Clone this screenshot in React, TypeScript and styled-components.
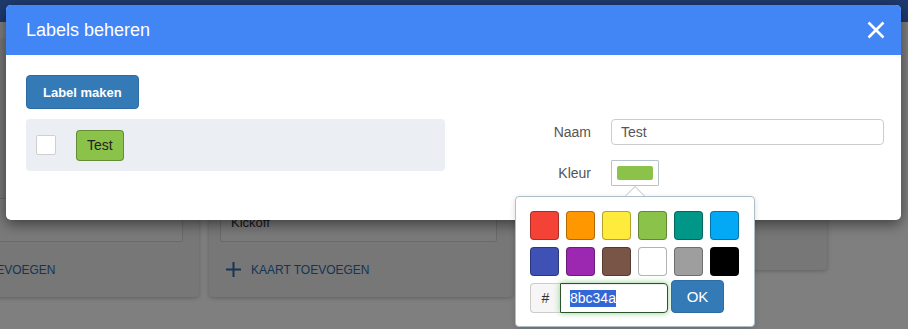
import React from 'react';
import styled, { createGlobalStyle } from 'styled-components';

const GlobalStyle = createGlobalStyle`
    body {
        margin: 0;
        font-family: "Liberation Sans", Arial, sans-serif;
    }
    * {
        box-sizing: border-box;
    }
`;

const Page = styled.div`
    position: relative;
    width: 908px;
    height: 329px;
    overflow: hidden;
    background: #fefefe;
`;

// app behind the dialog
const AppBar = styled.div`
    height: 22px;
    background: #3c74dc;
`;

const Board = styled.div`
    display: flex;
    align-items: flex-start;
    gap: 10px;
    margin-left: -105px;
    padding-top: 18px;
`;

const Column = styled.div<{ $height: number }>`
    flex: 0 0 304px;
    height: ${p => p.$height}px;
    display: flex;
    flex-direction: column;
    justify-content: flex-end;
    padding: 0 16px 0 11px;
    background: #eeeeee;
    border-radius: 4px;
    box-shadow: 0 1px 4px rgba(0, 0, 0, 0.25);
`;

const CardText = styled.div`
    height: 44px;
    padding: 16px 10px 0;
    background: #f4f4f4;
    border: 1px solid #d4d4d4;
    border-radius: 2px;
    font-size: 13px;
    color: #333;
    white-space: nowrap;
    overflow: hidden;
`;

const AddRow = styled.div`
    height: 55px;
    display: flex;
    align-items: center;
    gap: 10px;
    padding-left: 6px;
    font-size: 12px;
    color: #2c6aa6;
    text-transform: uppercase;
`;

const Backdrop = styled.div`
    position: absolute;
    inset: 0;
    padding: 5px 7px 0 6px;
    background: rgba(0, 0, 0, 0.5);
`;

const Modal = styled.div`
    background: #fff;
    border-radius: 5px;
    box-shadow: 0 4px 14px rgba(0, 0, 0, 0.5);
`;

const Header = styled.div`
    height: 50px;
    display: flex;
    align-items: center;
    justify-content: space-between;
    padding: 0 16px 0 20px;
    background: #4285f4;
    border-radius: 5px 5px 0 0;
    color: #fff;
`;

const Title = styled.h4`
    margin: 0;
    font-size: 18px;
    font-weight: normal;
`;

const CloseButton = styled.button`
    display: flex;
    padding: 0;
    border: none;
    background: none;
    color: #fff;
`;

const Body = styled.div`
    padding: 20px 17px 34px 20px;
`;

const PrimaryButton = styled.button`
    height: 34px;
    padding: 0 16px;
    background: #337ab7;
    border: 1px solid #2e6da4;
    border-radius: 4px;
    color: #fff;
    font-family: inherit;
    font-size: 13px;
    font-weight: bold;
`;

const Columns = styled.div`
    display: grid;
    grid-template-columns: 1fr 1fr;
    column-gap: 20px;
    align-items: start;
    margin-top: 10px;
`;

const LabelList = styled.div`
    padding: 10px;
    background: #ebeef2;
    border-radius: 4px;
`;

const LabelRow = styled.div`
    display: flex;
    align-items: center;
    gap: 20px;
    height: 32px;
`;

const Check = styled.input`
    appearance: none;
    width: 20px;
    height: 20px;
    margin: 0;
    background: #fff;
    border: 1px solid #cfcfcf;
    border-radius: 2px;
`;

const Tag = styled.span<{ $color: string }>`
    height: 31px;
    padding: 0 10px;
    line-height: 29px;
    background: ${p => p.$color};
    border: 1px solid rgba(0, 0, 0, 0.28);
    border-radius: 4px;
    font-size: 14px;
    color: #222;
`;

const Form = styled.div`
    display: flex;
    flex-direction: column;
    gap: 15px;
`;

const Field = styled.div`
    display: grid;
    grid-template-columns: 126px 1fr;
    column-gap: 20px;
    align-items: center;
`;

const FieldLabel = styled.label`
    text-align: right;
    font-size: 14px;
    color: #555;
`;

const TextInput = styled.input`
    width: 100%;
    height: 26px;
    padding: 0 9px;
    border: 1px solid #ccc;
    border-radius: 4px;
    font-family: inherit;
    font-size: 14px;
    color: #555;
    outline: none;
`;

const ColorAnchor = styled.div`
    position: relative;
    justify-self: start;
`;

const ColorButton = styled.button`
    display: block;
    width: 48px;
    height: 26px;
    padding: 5px;
    background: #fff;
    border: 1px solid #b6c3cc;
    border-radius: 1px;
`;

const ColorChip = styled.span<{ $color: string }>`
    display: block;
    width: 36px;
    height: 14px;
    background: ${p => p.$color};
    border-radius: 2px;
`;

const Popover = styled.div`
    position: absolute;
    top: 36px;
    left: -96px;
    z-index: 2;
    width: 240px;
    padding: 14px 14px 13px;
    background: #fff;
    border: 1px solid #aebfca;
    border-radius: 4px;
    box-shadow: 0 2px 6px rgba(0, 0, 0, 0.15);

    &::before,
    &::after {
        content: '';
        position: absolute;
        border-style: solid;
        border-color: transparent;
    }
    &::before {
        top: -21px;
        left: 109px;
        border-width: 10px;
        border-bottom-color: #aebfca;
    }
    &::after {
        top: -19px;
        left: 110px;
        border-width: 9px;
        border-bottom-color: #fff;
    }
`;

const SwatchGrid = styled.div`
    display: grid;
    grid-template-columns: repeat(6, 29px);
    gap: 7px;
`;

const SwatchButton = styled.button<{ $color: string }>`
    width: 29px;
    height: 29px;
    padding: 0;
    background: ${p => p.$color};
    border: 1px solid rgba(0, 0, 0, 0.3);
    border-radius: 4px;
`;

const HexRow = styled.div`
    display: flex;
    align-items: flex-end;
    gap: 3px;
    margin-top: 4px;
`;

const InputGroup = styled.div`
    display: flex;
    height: 30px;
`;

const Addon = styled.span`
    width: 30px;
    display: flex;
    align-items: center;
    justify-content: center;
    background: #f6f6f6;
    border: 1px solid #ccc;
    border-right: none;
    border-radius: 4px 0 0 4px;
    font-size: 14px;
    color: #333;
`;

const HexField = styled.div`
    width: 108px;
    display: flex;
    align-items: center;
    padding-left: 9px;
    border: 1px solid #2b542c;
    border-radius: 0 4px 4px 0;
    box-shadow: inset 0 1px 1px rgba(0, 0, 0, 0.075), 0 0 6px #8fd08f;
    font-size: 14px;
`;

const Selected = styled.span`
    line-height: 17px;
    background: #3367d6;
    color: #fff;
`;

const OkButton = styled.button`
    width: 53px;
    height: 33px;
    padding: 0;
    background: #337ab7;
    border: 1px solid #2e6da4;
    border-radius: 4px;
    color: #fff;
    font-family: inherit;
    font-size: 15px;
`;

const swatches = [
    '#f44336', '#ff9800', '#ffeb3b', '#8bc34a', '#009688', '#03a9f4',
    '#3f51b5', '#9c27b0', '#795548', '#ffffff', '#9e9e9e', '#000000',
];

const columns = [
    { height: 257, text: 'Klantmoment.' },
    { height: 257, text: 'Kickoff' },
    { height: 230, text: '' },
];

function PlusIcon() {
    return (
        <svg width="15" height="15" viewBox="0 0 15 15">
            <path d="M7.5 0v15M0 7.5h15" stroke="currentColor" strokeWidth="2" />
        </svg>
    );
}

function CloseIcon() {
    return (
        <svg width="18" height="18" viewBox="0 0 18 18">
            <path d="M1.5 1.5l15 15M16.5 1.5l-15 15" stroke="currentColor" strokeWidth="2.6" />
        </svg>
    );
}

export default function App() {
    const current = '#8bc34a';

    return (
        <Page>
            <GlobalStyle />
            <AppBar />
            <Board>
                {columns.map((col, i) => (
                    <Column key={i} $height={col.height}>
                        <CardText>{col.text}</CardText>
                        <AddRow>
                            <PlusIcon />
                            Kaart toevoegen
                        </AddRow>
                    </Column>
                ))}
            </Board>

            <Backdrop>
                <Modal>
                    <Header>
                        <Title>Labels beheren</Title>
                        <CloseButton aria-label="Sluiten">
                            <CloseIcon />
                        </CloseButton>
                    </Header>
                    <Body>
                        <PrimaryButton>Label maken</PrimaryButton>
                        <Columns>
                            <LabelList>
                                <LabelRow>
                                    <Check type="checkbox" />
                                    <Tag $color={current}>Test</Tag>
                                </LabelRow>
                            </LabelList>
                            <Form>
                                <Field>
                                    <FieldLabel>Naam</FieldLabel>
                                    <TextInput defaultValue="Test" />
                                </Field>
                                <Field>
                                    <FieldLabel>Kleur</FieldLabel>
                                    <ColorAnchor>
                                        <ColorButton>
                                            <ColorChip $color={current} />
                                        </ColorButton>
                                        <Popover>
                                            <SwatchGrid>
                                                {swatches.map(c => (
                                                    <SwatchButton key={c} $color={c} />
                                                ))}
                                            </SwatchGrid>
                                            <HexRow>
                                                <InputGroup>
                                                    <Addon>#</Addon>
                                                    <HexField>
                                                        <Selected>8bc34a</Selected>
                                                    </HexField>
                                                </InputGroup>
                                                <OkButton>OK</OkButton>
                                            </HexRow>
                                        </Popover>
                                    </ColorAnchor>
                                </Field>
                            </Form>
                        </Columns>
                    </Body>
                </Modal>
            </Backdrop>
        </Page>
    );
}
